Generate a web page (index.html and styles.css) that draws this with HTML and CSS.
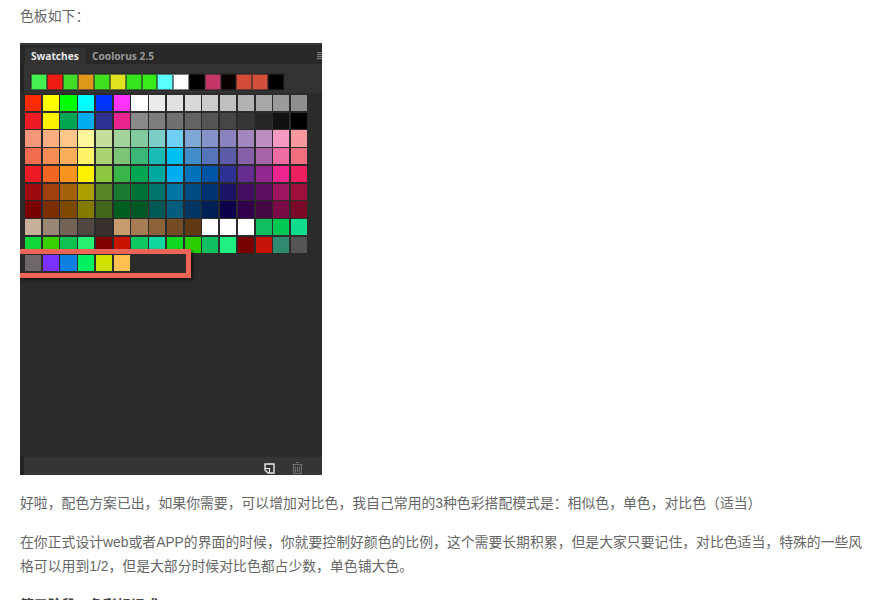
FILE: index.html
```html
<!DOCTYPE html>
<html lang="zh-CN">
<head>
  <meta charset="UTF-8" />
  <title>色板</title>
  <link rel="stylesheet" href="styles.css">
</head>
<body>
  <div class="article">
    <p>色板如下：</p>

    <div class="panel">
      <div class="tabs">
        <span class="tab active">Swatches</span>
        <span class="tab">Coolorus 2.5</span>
        <span class="menu"></span>
      </div>

      <div class="theme">
        <div class="theme-row">
          <i style="background:#44f050"></i><i style="background:#f01c14"></i><i style="background:#40dc28"></i><i style="background:#e0981c"></i><i style="background:#40e020"></i><i style="background:#e0e420"></i><i style="background:#34e41c"></i><i style="background:#38ec1c"></i><i style="background:#5cffff"></i><i style="background:#ffffff"></i><i style="background:#000000"></i><i style="background:#c43768"></i><i style="background:#0a0000"></i><i style="background:#d24c38"></i><i style="background:#d4503c"></i><i style="background:#000000"></i>
        </div>
      </div>

      <div class="grid">
        <i style="background:#ff2a00"></i><i style="background:#ffff00"></i><i style="background:#00ff00"></i><i style="background:#00ffff"></i><i style="background:#0033ff"></i><i style="background:#ff33ff"></i><i style="background:#ffffff"></i><i style="background:#ebebeb"></i><i style="background:#e1e1e1"></i><i style="background:#d7d7d7"></i><i style="background:#cbcbcb"></i><i style="background:#c0c0c0"></i><i style="background:#b2b2b2"></i><i style="background:#a8a8a8"></i><i style="background:#9b9b9b"></i><i style="background:#8f8f8f"></i>
        <i style="background:#ed1c24"></i><i style="background:#fff200"></i><i style="background:#00a651"></i><i style="background:#00aeef"></i><i style="background:#2e3192"></i><i style="background:#e92490"></i><i style="background:#898989"></i><i style="background:#7d7d7d"></i><i style="background:#707070"></i><i style="background:#636363"></i><i style="background:#555555"></i><i style="background:#464646"></i><i style="background:#363636"></i><i style="background:#262626"></i><i style="background:#111111"></i><i style="background:#000000"></i>
        <i style="background:#f7977a"></i><i style="background:#f9ad81"></i><i style="background:#fdc68a"></i><i style="background:#fff79a"></i><i style="background:#c4df9b"></i><i style="background:#a2d39c"></i><i style="background:#82ca9d"></i><i style="background:#7bcdc8"></i><i style="background:#6ecff6"></i><i style="background:#7ea7d8"></i><i style="background:#8493ca"></i><i style="background:#8882be"></i><i style="background:#a187be"></i><i style="background:#bc8dbf"></i><i style="background:#f49ac2"></i><i style="background:#f6989d"></i>
        <i style="background:#f26c4f"></i><i style="background:#f68e55"></i><i style="background:#fbaf5c"></i><i style="background:#fff467"></i><i style="background:#acd372"></i><i style="background:#7cc576"></i><i style="background:#3bb878"></i><i style="background:#1abbb4"></i><i style="background:#00bff3"></i><i style="background:#438cca"></i><i style="background:#5574b9"></i><i style="background:#5c5ba8"></i><i style="background:#855fa8"></i><i style="background:#a763a8"></i><i style="background:#ef6ca2"></i><i style="background:#f26d7d"></i>
        <i style="background:#ed1c24"></i><i style="background:#f26522"></i><i style="background:#f7941d"></i><i style="background:#fff200"></i><i style="background:#8dc73f"></i><i style="background:#39b54a"></i><i style="background:#00a651"></i><i style="background:#00a99d"></i><i style="background:#00aeef"></i><i style="background:#0072bc"></i><i style="background:#0054a6"></i><i style="background:#2e3192"></i><i style="background:#662d91"></i><i style="background:#92278f"></i><i style="background:#ee2590"></i><i style="background:#ed1f5f"></i>
        <i style="background:#9e0b0f"></i><i style="background:#a0410d"></i><i style="background:#a36209"></i><i style="background:#aba000"></i><i style="background:#598527"></i><i style="background:#1a7b30"></i><i style="background:#007236"></i><i style="background:#00746b"></i><i style="background:#0076a3"></i><i style="background:#004b80"></i><i style="background:#003471"></i><i style="background:#1b1464"></i><i style="background:#440e62"></i><i style="background:#5e1060"></i><i style="background:#9e1560"></i><i style="background:#9e0f3c"></i>
        <i style="background:#790000"></i><i style="background:#7b2e00"></i><i style="background:#7d4900"></i><i style="background:#827b00"></i><i style="background:#406618"></i><i style="background:#005e20"></i><i style="background:#005826"></i><i style="background:#005952"></i><i style="background:#005b7f"></i><i style="background:#003663"></i><i style="background:#002157"></i><i style="background:#0d004c"></i><i style="background:#32004b"></i><i style="background:#430845"></i><i style="background:#7a0a45"></i><i style="background:#7a0a28"></i>
        <i style="background:#c7b299"></i><i style="background:#998675"></i><i style="background:#736357"></i><i style="background:#534741"></i><i style="background:#37302d"></i><i style="background:#c69c6d"></i><i style="background:#a67c52"></i><i style="background:#8c6239"></i><i style="background:#754c24"></i><i style="background:#603913"></i><i style="background:#ffffff"></i><i style="background:#ffffff"></i><i style="background:#ffffff"></i><i style="background:#10c060"></i><i style="background:#00c853"></i><i style="background:#10dc90"></i>
        <i style="background:#10d838"></i><i style="background:#38d000"></i><i style="background:#10c050"></i><i style="background:#28f070"></i><i style="background:#800000"></i><i style="background:#c81400"></i><i style="background:#10c860"></i><i style="background:#10d8a0"></i><i style="background:#10d820"></i><i style="background:#28cc00"></i><i style="background:#10c060"></i><i style="background:#20f080"></i><i style="background:#780000"></i><i style="background:#c81408"></i><i style="background:#308a70"></i><i style="background:#555555"></i>
        <i style="background:#706868"></i><i style="background:#7a30ff"></i><i style="background:#1080e0"></i><i style="background:#00f060"></i><i style="background:#d0e000"></i><i style="background:#ffc050"></i>
        <span class="highlight"></span>
      </div>

      <div class="panel-foot">
        <svg class="foot-icon" width="11" height="11" viewBox="0 0 11 11">
          <path d="M1 1h9v9H4L1 7z" fill="none" stroke="#e8e8e8" stroke-width="1.4"/>
          <path d="M1 5.500h4.500V10" fill="none" stroke="#e8e8e8" stroke-width="1.2"/>
        </svg>
        <svg class="foot-icon" width="11" height="12" viewBox="0 0 11 12">
          <path d="M4 .5h3M.5 2.500h10M1.500 3V11.500h8V3M3.500 4.500v6M5.500 4.500v6M7.500 4.500v6" fill="none" stroke="#6e6e6e" stroke-width="1.1"/>
        </svg>
      </div>
    </div>

    <p>好啦，配色方案已出，如果你需要，可以增加对比色，我自己常用的3种色彩搭配模式是：相似色，单色，对比色（适当）</p>
    <p>在你正式设计web或者APP的界面的时候，你就要控制好颜色的比例，这个需要长期积累，但是大家只要记住，对比色适当，特殊的一些风格可以用到1/2，但是大部分时候对比色都占少数，单色铺大色。</p>
    <p class="heading">第三阶段：色彩标记或</p>
  </div>
</body>
</html>
```

FILE: styles.css
```css
html, body {
  height: 100%;
  overflow: hidden;
}

body {
  margin: 0;
  background-color: white;
  font-family: "Liberation Sans", "Noto Sans CJK SC", sans-serif;
  font-size: 13.85px;
  color: #666;
}

.article {
  padding: 4px 14px 0 20px;
}

p {
  margin: 0 0 15px;
  line-height: 24px;
}

.heading {
  font-weight: bold;
  color: #444;
}

.panel {
  position: relative;
  width: 302px;
  height: 432px;
  margin-bottom: 16px;
  background-color: #2b2b2b;
  display: flex;
  flex-direction: column;
}

/* dark strip down the left side of the panel */
.panel::before {
  content: "";
  position: absolute;
  left: 0;
  top: 0;
  bottom: 0;
  width: 4px;
  background-color: #222;
}

.tabs {
  position: relative;
  height: 19px;
  display: flex;
  align-items: flex-end;
  background-color: #282828;
  border-top: 2px solid #3a3a3a;
}

.tab {
  height: 16px;
  line-height: 16px;
  padding: 0 6px;
  font-family: "Noto Sans", sans-serif;
  font-size: 10.2px;
  font-weight: bold;
  color: #999;
}

.tab.active {
  margin-left: 5px;
  padding: 0 7px 0 6px;
  background-color: #333;
  color: #e6e6e6;
}

.menu {
  position: absolute;
  right: 0;
  top: 7px;
  width: 5px;
  height: 8px;
  background: repeating-linear-gradient(#777 0 1px, #333 1px 2px);
}

.theme {
  height: 29px;
  padding: 9px 0 0 10px;
  background-color: #333;
  box-sizing: border-box;
}

.theme-row {
  display: flex;
  width: 253px;
  padding: 1px;
  background-color: #2a2a2a;
}

.theme-row i {
  width: 15.8px;
  height: 15.5px;
  flex: none;
  box-shadow: inset 0 0 0 1px rgba(40, 40, 40, 0.6);
}

.grid {
  position: relative;
  flex: 1;
  display: grid;
  grid-template-columns: repeat(16, 16.1px);
  grid-auto-rows: 16.1px;
  gap: 1.65px;
  align-content: start;
  padding: 2px 0 0 5px;
  background-color: #2b2b2b;
}

.grid i {
  display: block;
}

.highlight {
  position: absolute;
  left: 0;
  top: 156px;
  width: 166px;
  height: 19px;
  border: 5px solid #ee6557;
  border-left: none;
  box-shadow: 2px 2px 3px rgba(0, 0, 0, 0.6);
}

.panel-foot {
  height: 18px;
  display: flex;
  justify-content: flex-end;
  align-items: flex-end;
  gap: 17px;
  padding: 0 19px 1px 0;
  box-sizing: border-box;
  background-color: #353535;
}
```
